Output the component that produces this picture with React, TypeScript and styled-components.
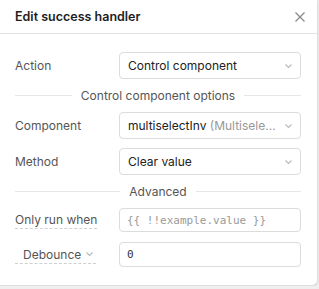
import React from "react";
import styled, { createGlobalStyle } from "styled-components";

const GlobalStyle = createGlobalStyle`
  html, body {
    margin: 0;
    padding: 0;
    background: #efefef;
    font-family: Inter, "Noto Sans", sans-serif;
  }
`;

const Modal = styled.div`
  width: 318px;
  height: 286px;
  box-sizing: border-box;
  background: #fff;
  border-right: 1px solid #dedede;
  border-bottom: 1px solid #dedede;
  border-bottom-right-radius: 6px;
  box-shadow: 0 1px 3px rgba(0, 0, 0, 0.08);
  display: flex;
  flex-direction: column;
`;

const Header = styled.div`
  height: 34px;
  box-sizing: border-box;
  display: flex;
  align-items: center;
  justify-content: space-between;
  padding: 0 11px 0 15px;
  border-bottom: 1px solid #e3e3e3;
`;

const Title = styled.div`
  font-size: 12.5px;
  font-weight: 600;
  color: #1d1d1d;
`;

const Body = styled.div`
  padding: 18px 16px 0 15px;
  display: flex;
  flex-direction: column;
`;

const Row = styled.div<{ $gap?: number }>`
  display: grid;
  grid-template-columns: 104px minmax(0, 1fr);
  align-items: center;
  margin-bottom: ${(p) => p.$gap ?? 9}px;
`;

const Label = styled.div<{ $dotted?: boolean; $indent?: boolean }>`
  font-size: 12px;
  color: #555;
  justify-self: start;
  display: flex;
  align-items: center;
  gap: 4px;
  padding-left: ${(p) => (p.$indent ? "8px" : "0")};
  padding-right: ${(p) => (p.$indent ? "2px" : "0")};
  border-bottom: ${(p) => (p.$dotted ? "1px dashed #cfcfcf" : "none")};
  line-height: 17px;
`;

const Select = styled.div`
  height: 27px;
  box-sizing: border-box;
  border: 1px solid #dcdcdc;
  border-radius: 4px;
  display: flex;
  align-items: center;
  padding: 0 7px 0 8px;
  font-size: 12px;
  color: #222;
  gap: 3px;
  min-width: 0;
`;

const SelectText = styled.span`
  flex: 1;
  min-width: 0;
  white-space: nowrap;
  overflow: hidden;
`;

const Muted = styled.span`
  color: #999;
`;

const CodeInput = styled.div<{ $h: number; $placeholder?: boolean }>`
  height: ${(p) => p.$h}px;
  box-sizing: border-box;
  border: 1px solid #dcdcdc;
  border-radius: 4px;
  display: flex;
  align-items: center;
  padding: 0 7px;
  font-family: "DejaVu Sans Mono", "Liberation Mono", monospace;
  font-size: 11px;
  color: ${(p) => (p.$placeholder ? "#9a9a9a" : "#333")};
  white-space: nowrap;
`;

const Divider = styled.div`
  display: flex;
  align-items: center;
  gap: 9px;
  font-size: 12px;
  color: #555;
  margin-bottom: 9px;
  line-height: 15px;
  &::before,
  &::after {
    content: "";
    flex: 1;
    height: 1px;
    background: #e6e6e6;
  }
`;

const Chevron = ({ color = "#b8b8b8" }: { color?: string }) => (
  <svg width="9" height="6" viewBox="0 0 9 6" fill="none">
    <path d="M1.5 1.5 L4.5 4.5 L7.5 1.5" stroke={color} strokeWidth="1.1" />
  </svg>
);

const CloseIcon = () => (
  <svg width="12" height="12" viewBox="0 0 12 12" fill="none">
    <path d="M1.5 1.5 L10.5 10.5 M10.5 1.5 L1.5 10.5" stroke="#8a8a8a" strokeWidth="1.3" />
  </svg>
);

export default function App() {
  return (
    <>
      <GlobalStyle />
      <Modal>
        <Header>
          <Title>Edit success handler</Title>
          <CloseIcon />
        </Header>
        <Body>
          <Row $gap={9}>
            <Label>Action</Label>
            <Select>
              <SelectText>Control component</SelectText>
              <Chevron />
            </Select>
          </Row>
          <Divider>Control component options</Divider>
          <Row>
            <Label>Component</Label>
            <Select>
              <SelectText>
                multiselectInv <Muted>(Multisele...</Muted>
              </SelectText>
              <Chevron />
            </Select>
          </Row>
          <Row>
            <Label>Method</Label>
            <Select>
              <SelectText>Clear value</SelectText>
              <Chevron />
            </Select>
          </Row>
          <Divider>Advanced</Divider>
          <Row $gap={10}>
            <Label $dotted>Only run when</Label>
            <CodeInput $h={24} $placeholder>
              {"{{ !!example.value }}"}
            </CodeInput>
          </Row>
          <Row>
            <Label $dotted $indent>
              Debounce <Chevron />
            </Label>
            <CodeInput $h={25}>0</CodeInput>
          </Row>
        </Body>
      </Modal>
    </>
  );
}
